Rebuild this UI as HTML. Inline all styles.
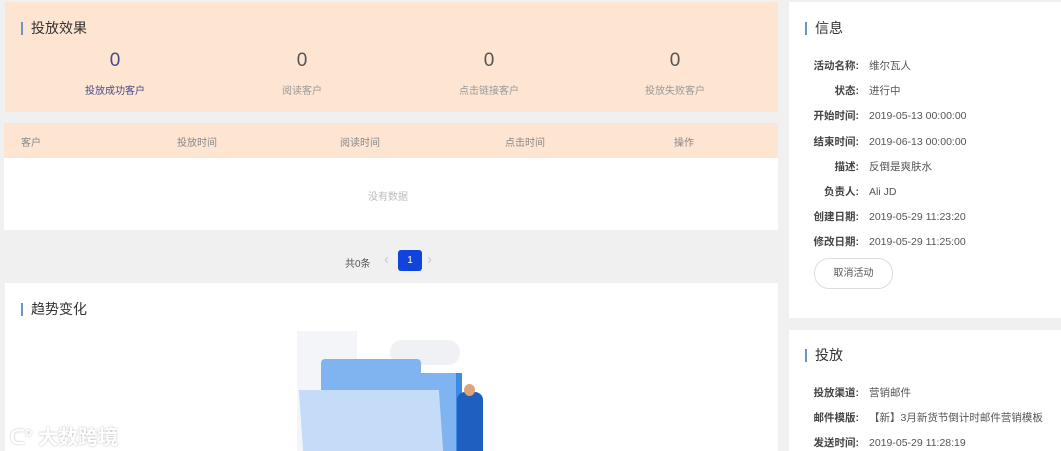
<!DOCTYPE html><html><head><meta charset="utf-8"><style>
body{margin:0;width:1061px;height:451px;background:#f0f0f0;font-family:"Liberation Sans","Noto Sans CJK SC",sans-serif;position:relative;overflow:hidden;color:#333}
.a{position:absolute}
.t{font-size:14px;color:#333;padding-left:8px;border-left:2px solid #6a95c0;line-height:13px}
.num{position:absolute;top:50px;width:120px;text-align:center;font-size:19px;color:#555}
.lab{position:absolute;top:82px;width:120px;text-align:center;font-size:10px;color:#999}
.th{position:absolute;top:134px;font-size:10px;color:#888}
.row{position:absolute;left:812px;font-size:10.5px;color:#555}
.row b{display:inline-block;width:47px;text-align:right;color:#444;margin-right:10px;font-weight:bold}
</style></head><body>
<div class="a" style="left:5px;top:2px;width:773px;height:110px;background:#fde5d2"></div>
<div class="a t" style="left:21px;top:22px">投放效果</div>
<div class="num" style="left:55px;color:#4a4a8a">0</div><div class="lab" style="left:55px;color:#4a4a8a">投放成功客户</div>
<div class="num" style="left:242px">0</div><div class="lab" style="left:242px">阅读客户</div>
<div class="num" style="left:429px">0</div><div class="lab" style="left:429px">点击链接客户</div>
<div class="num" style="left:615px">0</div><div class="lab" style="left:615px">投放失败客户</div>
<div class="a" style="left:4px;top:123px;width:774px;height:35px;background:#fde5d2"></div>
<div class="a" style="left:4px;top:158px;width:774px;height:72px;background:#fff"></div>
<div class="th" style="left:21px">客户</div><div class="th" style="left:177px">投放时间</div><div class="th" style="left:340px">阅读时间</div><div class="th" style="left:505px">点击时间</div><div class="th" style="left:674px">操作</div>
<div class="a" style="left:368px;top:188px;font-size:10px;color:#bbb">没有数据</div>
<div class="a" style="left:345px;top:255px;font-size:10px;color:#555">共0条</div>
<div class="a" style="left:384px;top:251px;font-size:15px;color:#ccc">‹</div>
<div class="a" style="left:398px;top:250px;width:24px;height:21px;background:#1144dd;border-radius:3px;color:#fff;font-size:10px;text-align:center;line-height:21px">1</div>
<div class="a" style="left:427px;top:251px;font-size:15px;color:#ccc">›</div>
<div class="a" style="left:5px;top:283px;width:773px;height:168px;background:#fff"></div>
<div class="a t" style="left:21px;top:303px">趋势变化</div>
<div class="a" style="left:297px;top:331px;width:60px;height:120px;background:#f3f5f8"></div>
<div class="a" style="left:390px;top:340px;width:70px;height:25px;background:#f0f1f4;border-radius:12px"></div>
<div class="a" style="left:321px;top:359px;width:100px;height:92px;background:#7fb4f0;border-radius:4px 4px 0 0"></div>
<div class="a" style="left:321px;top:373px;width:135px;height:78px;background:#7fb4f0;border-right:6px solid #3a8ae6"></div>
<div class="a" style="left:301px;top:390px;width:140px;height:61px;background:#c4dcf7;transform:skewX(4deg)"></div>
<div class="a" style="left:457px;top:392px;width:26px;height:59px;background:#1e5fbf;border-radius:8px 8px 0 0"></div>
<div class="a" style="left:464px;top:384px;width:11px;height:12px;background:#e0a27a;border-radius:50%"></div>
<div class="a" style="left:10px;top:421px;font-size:20px;color:#fff;text-shadow:0 0 2px #aaa;font-weight:bold;opacity:.85">ᑕ° 大数跨境</div>
<div class="a" style="left:789px;top:2px;width:272px;height:316px;background:#fff"></div>
<div class="a t" style="left:805px;top:22px">信息</div>
<div class="row" style="top:58px"><b>活动名称:</b>维尔瓦人</div>
<div class="row" style="top:83px"><b>状态:</b>进行中</div>
<div class="row" style="top:108px"><b>开始时间:</b>2019-05-13 00:00:00</div>
<div class="row" style="top:134px"><b>结束时间:</b>2019-06-13 00:00:00</div>
<div class="row" style="top:159px"><b>描述:</b>反倒是爽肤水</div>
<div class="row" style="top:184px"><b>负责人:</b>Ali JD</div>
<div class="row" style="top:209px"><b>创建日期:</b>2019-05-29 11:23:20</div>
<div class="row" style="top:234px"><b>修改日期:</b>2019-05-29 11:25:00</div>
<div class="a" style="left:814px;top:258px;width:77px;height:29px;border:1px solid #ddd;border-radius:15px;font-size:10px;color:#555;text-align:center;line-height:29px">取消活动</div>
<div class="a" style="left:789px;top:330px;width:272px;height:121px;background:#fff"></div>
<div class="a t" style="left:805px;top:349px">投放</div>
<div class="row" style="top:385px"><b>投放渠道:</b>营销邮件</div>
<div class="row" style="top:410px"><b>邮件模版:</b>【新】3月新货节倒计时邮件营销模板</div>
<div class="row" style="top:435px"><b>发送时间:</b>2019-05-29 11:28:19</div>
</body></html>
